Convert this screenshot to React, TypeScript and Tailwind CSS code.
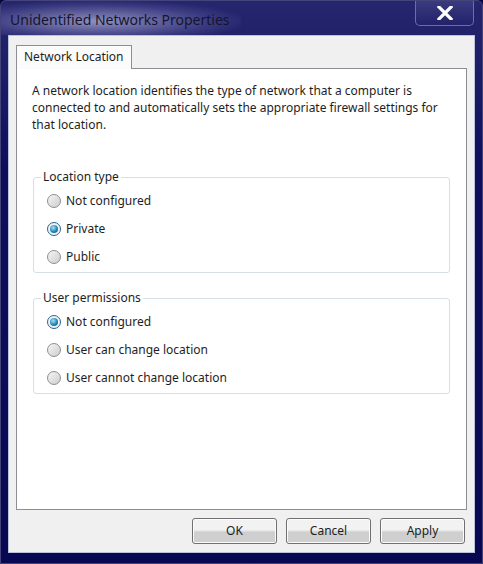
import React from "react";

const font = { fontFamily: '"Noto Sans", "Open Sans", sans-serif' };

const Radio = ({ checked, label }: { checked?: boolean; label: string }) => (
  <label className="flex h-[28px] items-center gap-[5px] pl-[13px]">
    <span
      className={`flex h-[14px] w-[14px] items-center justify-center rounded-full border ${
        checked ? "border-[#2c628b] bg-[#f4f4f4]" : "border-[#8e8f8f] bg-gradient-to-br from-[#f6f6f6] to-[#cdcdcd]"
      }`}
    >
      {checked && (
        <span className="h-[8px] w-[8px] rounded-full bg-[radial-gradient(circle_at_40%_35%,#9ee4ff,#1b7eb0_60%,#0b4f7c)]" />
      )}
    </span>
    <span className="text-[12px] text-[#1e1e1e]">{label}</span>
  </label>
);

const Group = ({ title, items, selected }: { title: string; items: string[]; selected: number }) => (
  <fieldset className="mx-[1px] rounded-[3px] border border-[#d5dfe5] pb-[1px] pt-0">
    <legend className="ml-[7px] px-[2px] text-[12px] leading-[14px] text-[#1e1e1e]">{title}</legend>
    <div className="mt-[3px]">
      {items.map((t, i) => (
        <Radio key={t} label={t} checked={i === selected} />
      ))}
    </div>
  </fieldset>
);

const Button = ({ children }: { children: React.ReactNode }) => (
  <button className="h-[26px] w-[85px] rounded-[3px] border border-[#707070] bg-gradient-to-b from-[#f2f2f2] from-45% to-[#cfcfcf] to-55% text-[12px] text-[#1e1e1e] shadow-[inset_0_0_0_1px_#fcfcfc]">
    {children}
  </button>
);

export default function App() {
  return (
    <div style={font} className="h-[564px] w-[483px] overflow-hidden bg-[#06063e]">
      <div className="flex h-full flex-col rounded-t-[6px] border border-[#44447a] bg-gradient-to-b from-[#26266e] via-[#0e0e5c] via-30% to-[#080852]">
        {/* title bar */}
        <div className="relative flex h-[34px] items-start">
          <div className="absolute left-0 top-0 h-[34px] w-[240px] bg-[radial-gradient(ellipse_at_40%_60%,rgba(190,190,225,0.7),rgba(110,110,175,0.3)_55%,transparent_75%)]" />
          <span className="relative ml-[9px] mt-[8px] text-[14px] text-[#151530]">
            Unidentified Networks Properties
          </span>
          <div className="ml-auto mr-[8px] flex h-[25px] w-[59px] items-center justify-center rounded-b-[5px] border border-t-0 border-[#6e6ea4] bg-gradient-to-b from-[#3a3a80] to-[#22226a]">
            <svg width="16" height="14" viewBox="0 0 16 14">
              <path d="M2 1 L14 13 M14 1 L2 13" stroke="#ffffff" strokeWidth="3.2" strokeLinecap="square" />
            </svg>
          </div>
        </div>
        {/* client */}
        <div className="mx-[7px] mb-[10px] flex flex-1 flex-col border border-[#b8c2da] bg-[#f0f0f0] px-[7px] pt-[9px]">
          <div className="flex">
            <div className="relative z-10 -mb-[1px] border border-b-0 border-[#8c8e94] bg-[#fbfbfb] px-[7px] pb-[3px] pt-[2px] text-[12px] text-[#1e1e1e]">
              Network Location
            </div>
          </div>
          <div className="h-[442px] border border-[#8c8e94] bg-white px-[15px] pt-[13px]">
            <p className="text-[12px] leading-[17px] text-[#1e1e1e]">
              A network location identifies the type of network that a computer is connected to and
              automatically sets the appropriate firewall settings for that location.
            </p>
            <div className="mt-[37px]">
              <Group
                title="Location type"
                items={["Not configured", "Private", "Public"]}
                selected={1}
              />
            </div>
            <div className="mt-[18px]">
              <Group
                title="User permissions"
                items={["Not configured", "User can change location", "User cannot change location"]}
                selected={0}
              />
            </div>
          </div>
          <div className="mt-[8px] flex justify-end gap-[9px] pr-[2px]">
            <Button>OK</Button>
            <Button>Cancel</Button>
            <Button>Apply</Button>
          </div>
        </div>
      </div>
    </div>
  );
}
